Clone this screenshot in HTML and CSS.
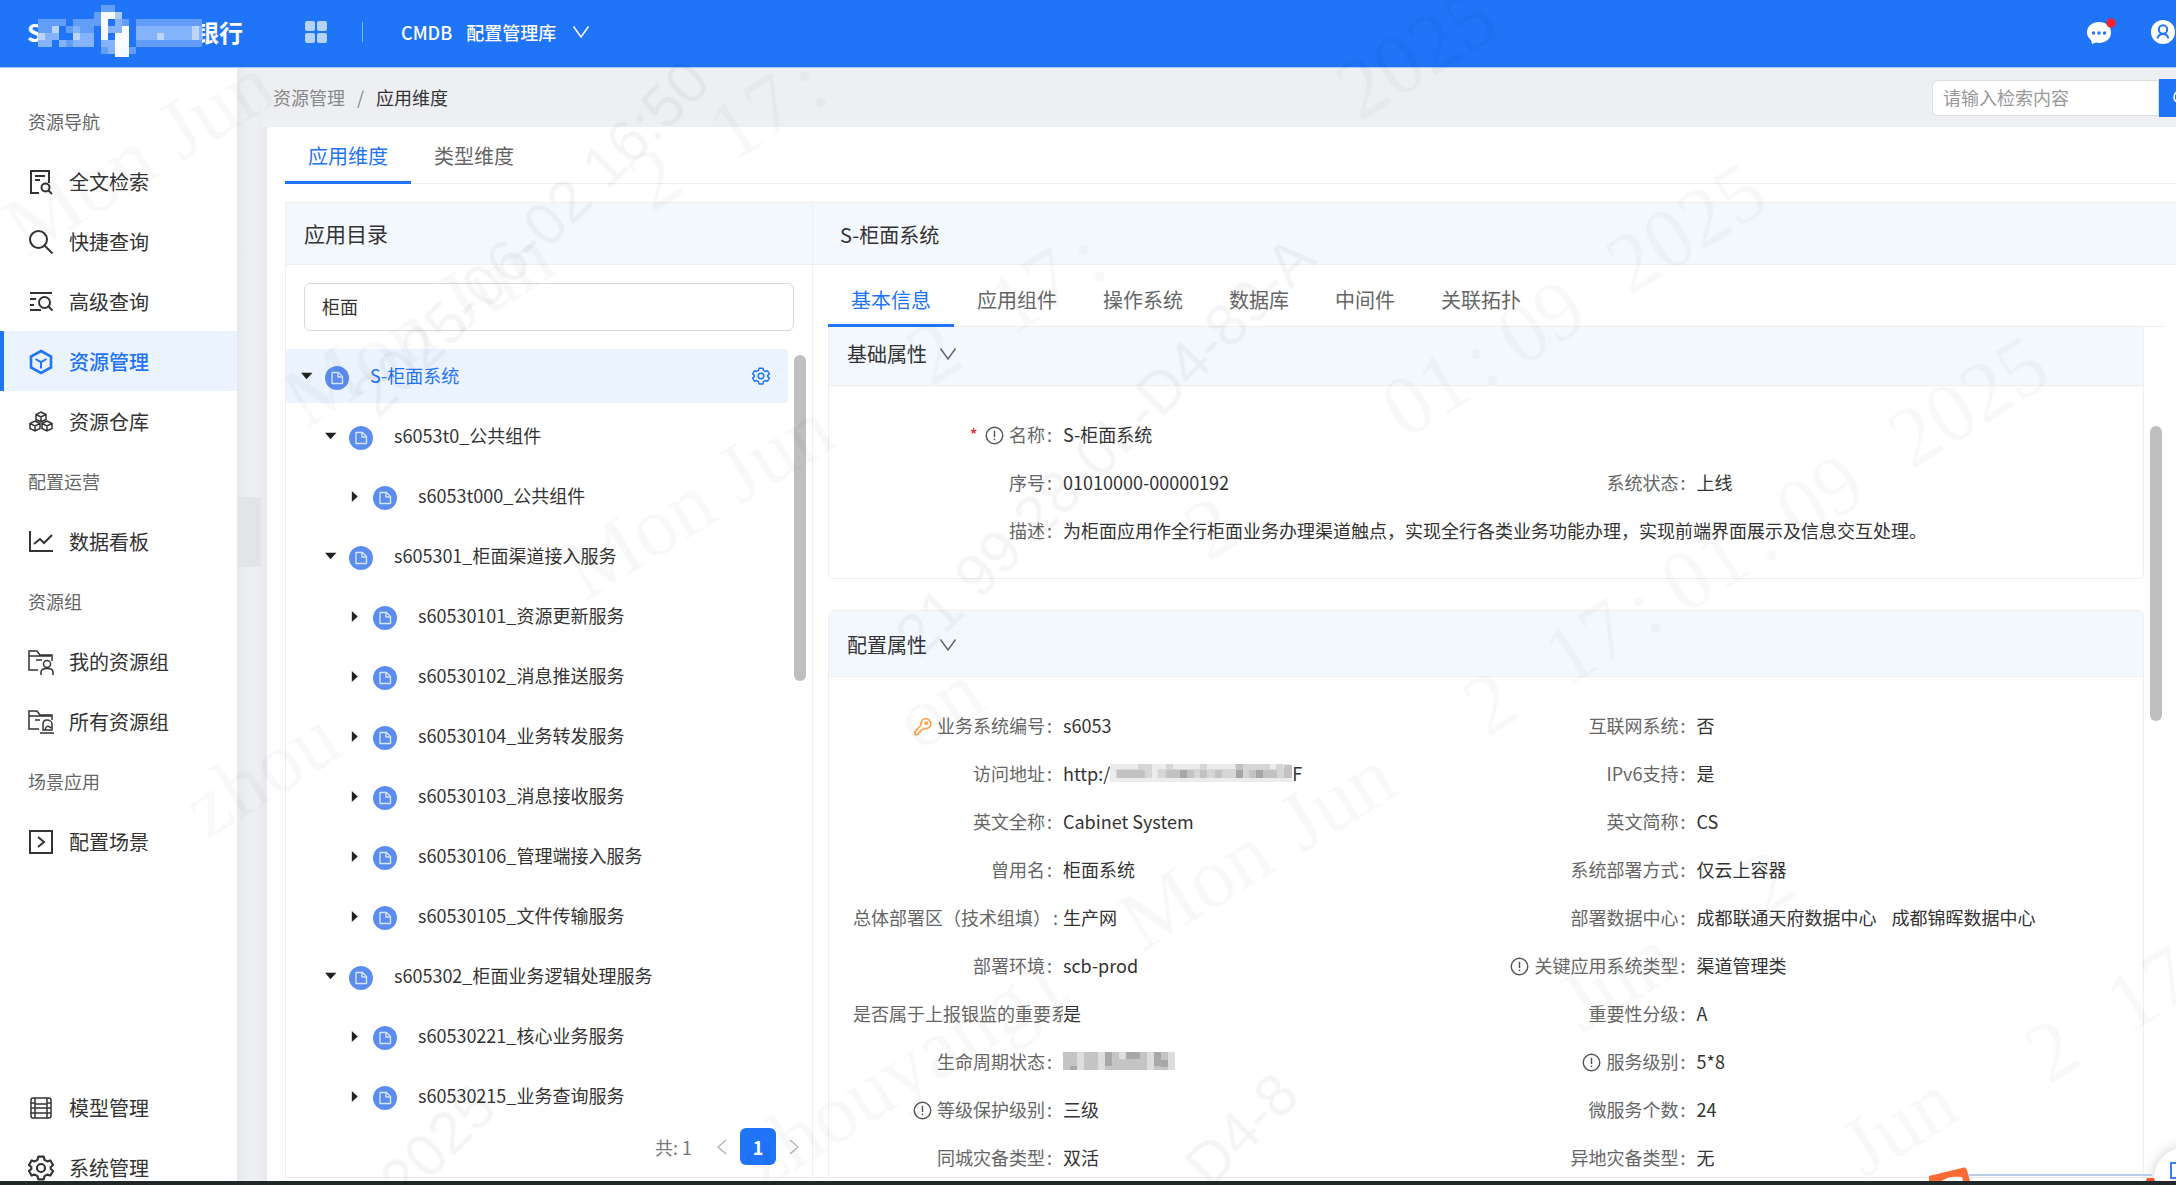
FILE: index.html
```html
<!DOCTYPE html>
<html lang="zh-CN">
<head>
<meta charset="utf-8">
<meta name="viewport" content="width=device-width, initial-scale=1">
<title>CMDB 配置管理库 - 资源管理</title>
<link rel="stylesheet" href="styles.css">
</head>
<body>
<svg class="sprite" aria-hidden="true">
  <symbol id="i-doc" viewBox="0 0 24 24"><circle cx="12" cy="12" r="12" fill="#5b8def"/><path d="M7 6.500h6.500l4 4v7h-10.500zM13 6.500v4.500h4.500" fill="none" stroke="#d5e2fb" stroke-width="1.400" stroke-linejoin="round"/></symbol>
  <symbol id="i-down" viewBox="0 0 12 12"><path d="M1 2.500h10.500L6 8.500z" fill="#222"/></symbol>
  <symbol id="i-right" viewBox="0 0 12 12"><path d="M3.500 1v10L9 6z" fill="#222"/></symbol>
  <symbol id="i-info" viewBox="0 0 20 20"><circle cx="10" cy="10" r="8.700" fill="none" stroke="#555" stroke-width="1.500"/><path d="M10 5v6.500M10 13.200v1.800" stroke="#555" stroke-width="1.500"/></symbol>
  <symbol id="i-chev" viewBox="0 0 18 18"><path d="M1.500 3.500L9 14l7.500-10.500" fill="none" stroke="currentColor" stroke-width="1.500"/></symbol>
  <symbol id="i-gear" viewBox="0 0 24 24"><path d="M9.500 1.500h5l.8 3 2.400 1.400 3-.9 2.400 4.200-2.200 2.100v1.400l2.200 2.100-2.400 4.200-3-.9-2.400 1.400-.8 3h-5l-.8-3-2.400-1.400-3 .9L.900 14.800l2.200-2.100v-1.400L.900 9.200l2.400-4.200 3 .9 2.400-1.400z" fill="none" stroke="currentColor" stroke-width="2" stroke-linejoin="round"/><circle cx="12" cy="12" r="3.700" fill="none" stroke="currentColor" stroke-width="2"/></symbol>
</svg>

<header class="header">
  <a class="logo" href="#" aria-label="首页"><span>S</span>
    <svg class="logo-mask" viewBox="0 0 164 56" aria-hidden="true">
      <rect width="164" height="56" fill="#1f74f7"/>
      <g fill="#fff">
        <path opacity=".3" d="M0 15h7v7H0zM7 15h14v7H7zM21 15h7v7h-7zM35 15h14v7H35zM49 15h7v7h-7zM0 22h14v7H0zM28 22h7v7h-7zM42 22h14v7H42zM28 36h7v7h-7zM56 8h7v14h-7zM63 1h14v7H63zM77 8h7v7h-7zM84 15h7v28h-7zM63 43h7v7h-7zM91 43h7v7h-7zM98 15h66v7H98zM98 36h66v7H98z"/>
        <path opacity=".45" d="M14 22h7v7h-7zM0 29h21v7H0zM7 36h7v7H7zM35 22h7v21h-7zM42 29h14v14H42zM63 15h7v7h-7zM98 22h66v14H98z"/>
        <path opacity=".45" d="M0 29h7v14H0zM14 22h7v7h-7zM21 36h7v7h-7zM35 29h7v7h-7zM77 8h7v14h-7zM70 22h14v7H70zM63 36h7v7h-7zM70 36h14v7H70zM70 43h7v7h-7zM119 29h7v7h-7zM154 22h7v14h-7z"/>
        <path opacity=".96" d="M63 8h14v7H63zM63 15h7v21h-7zM84 22h7v7h-7zM77 29h14v14H77zM77 43h14v7H77zM77 50h14v3H77z"/>
      </g>
    </svg><span>银行</span></a>
  <button class="icon-btn apps" aria-label="应用列表"><svg width="22" height="22" viewBox="0 0 22 22" fill="#b5d1fd"><rect width="10" height="10" rx="2"/><rect x="12" width="10" height="10" rx="2"/><rect y="12" width="10" height="10" rx="2"/><rect x="12" y="12" width="10" height="10" rx="2"/></svg></button>
  <span class="sep"></span>
  <button class="product"><span>CMDB</span><span>配置管理库</span><svg width="18" height="18"><use href="#i-chev"/></svg></button>
  <div class="header-right">
    <button class="icon-btn" aria-label="消息"><svg width="32" height="30" viewBox="0 0 32 30"><path d="M14 5C7 5 2 9.500 2 15.500c0 3 1.500 5.500 4 7.500L7 27l4-1.500c1 .3 2 .4 3 .4 7 0 12-4.400 12-10.400S21 5 14 5z" fill="#fff"/><circle cx="8.500" cy="16" r="1.700" fill="#1f74f7"/><circle cx="14" cy="16" r="1.700" fill="#1f74f7"/><circle cx="19.500" cy="16" r="1.700" fill="#1f74f7"/><circle cx="26" cy="6" r="4.700" fill="#f5222d"/></svg></button>
    <button class="icon-btn" aria-label="用户"><svg width="24" height="24" viewBox="0 0 24 24"><circle cx="12" cy="12" r="12" fill="#fff"/><circle cx="12" cy="9.500" r="4.200" fill="none" stroke="#1f74f7" stroke-width="2"/><path d="M6.500 18.500c.8-3 2.600-4.500 5.500-4.500s4.700 1.500 5.500 4.500" fill="none" stroke="#1f74f7" stroke-width="2"/></svg></button>
  </div>
</header>

<div class="body">
  <nav class="sidebar">
    <h2>资源导航</h2>
    <a href="#"><svg viewBox="0 0 26 26"><path d="M11 24H3V2h18v12" /><path d="M7 7h10M7 11h5"/><circle cx="17.500" cy="18.500" r="4"/><path d="M20.500 21.500l3.500 3.500"/></svg>全文检索</a>
    <a href="#"><svg viewBox="0 0 26 26"><circle cx="10.500" cy="10.500" r="8.500"/><path d="M16.500 16.500l8 8"/></svg>快捷查询</a>
    <a href="#"><svg viewBox="0 0 26 26"><path d="M2 4h22M2 10h6M2 16h4M2 21h11"/><circle cx="16.500" cy="13.500" r="5.500"/><path d="M20.500 17.500l4 4"/></svg>高级查询</a>
    <a href="#" class="on"><svg viewBox="0 0 26 26"><path d="M13 2l10 5.500v11L13 24 3 18.500v-11z" stroke-width="2.600"/><path d="M7.500 10l5.500 3.200 5.500-3.200M13 13v6.500"/></svg>资源管理</a>
    <a href="#"><svg viewBox="0 0 26 26" class="fine"><path d="M13 3l5 2.500v5L13 13l-5-2.500v-5zM8 5.500l5 2.500 5-2.500M13 8v5M7 12l5 2.500v5L7 22l-5-2.500v-5zM2 14.500L7 17l5-2.500M7 17v5M19 12l5 2.500v5L19 22l-5-2.500v-5zM14 14.500l5 2.500 5-2.500M19 17v5"/></svg>资源仓库</a>
    <h2>配置运营</h2>
    <a href="#"><svg viewBox="0 0 26 26"><path d="M2 2v20h23"/><path d="M6 15l6-5 4 4 8-8"/></svg>数据看板</a>
    <h2>资源组</h2>
    <a href="#"><svg viewBox="0 0 26 26" class="fine"><path d="M10 21H1V2h8l3 4h12v6M1 7h22M8 11h6"/><circle cx="19" cy="15" r="3.500"/><path d="M13 26v-3c0-2 2-3.500 6-3.500s6 1.500 6 3.500v3"/></svg>我的资源组</a>
    <a href="#"><svg viewBox="0 0 26 26" class="fine"><path d="M11 20H1V2h8l3 4h12v5M1 7h22M7 11h5"/><path d="M15 21v-6c0-2 1-4 4-4s5 2 5 4v6zM12 24h14M17 21c1-4 3-5 6-2"/></svg>所有资源组</a>
    <h2>场景应用</h2>
    <a href="#"><svg viewBox="0 0 26 26"><path d="M2 2h22v22H2z"/><path d="M10 8l6 5-6 5"/></svg>配置场景</a>
    <div class="nav-bottom">
      <a href="#"><svg viewBox="0 0 26 26" class="fine"><rect x="3" y="3" width="20" height="20" rx="2"/><path d="M7 3v20M19 3v20M7 9h12M7 13h12M7 18h12M3 8h4M3 13h4M3 18h4M19 8h4M19 13h4M19 18h4"/></svg>模型管理</a>
      <a href="#"><svg><use href="#i-gear"/></svg>系统管理</a>
    </div>
  </nav>

  <main class="main">
    <div class="topbar">
      <div class="crumbs"><a href="#">资源管理</a><i>/</i><span>应用维度</span></div>
      <form class="search"><input type="text" placeholder="请输入检索内容" aria-label="检索内容"><button type="button" aria-label="检索"><svg width="20" height="20" viewBox="0 0 20 20" fill="none" stroke="#fff" stroke-width="1.600"><circle cx="8" cy="9" r="6"/><path d="M13 14l5 5"/></svg></button></form>
    </div>
    <section class="card">
      <div class="tabs" role="tablist"><button class="tab on" role="tab">应用维度</button><button class="tab" role="tab">类型维度</button></div>
      <div class="panel">
        <aside class="left">
          <h3 class="panel-head">应用目录</h3>
          <div class="filter"><input type="text" value="柜面" aria-label="应用目录过滤"></div>
          <div class="tree-wrap">
            <ul class="tree">
              <li class="l0 on"><button aria-label="收起"><svg><use href="#i-down"/></svg></button><svg class="doc"><use href="#i-doc"/></svg><span>S-柜面系统</span><button class="cfg" aria-label="设置"><svg><use href="#i-gear"/></svg></button></li>
              <li class="l1"><button aria-label="收起"><svg><use href="#i-down"/></svg></button><svg class="doc"><use href="#i-doc"/></svg><span>s6053t0_公共组件</span></li>
              <li class="l2"><button aria-label="展开"><svg><use href="#i-right"/></svg></button><svg class="doc"><use href="#i-doc"/></svg><span>s6053t000_公共组件</span></li>
              <li class="l1"><button aria-label="收起"><svg><use href="#i-down"/></svg></button><svg class="doc"><use href="#i-doc"/></svg><span>s605301_柜面渠道接入服务</span></li>
              <li class="l2"><button aria-label="展开"><svg><use href="#i-right"/></svg></button><svg class="doc"><use href="#i-doc"/></svg><span>s60530101_资源更新服务</span></li>
              <li class="l2"><button aria-label="展开"><svg><use href="#i-right"/></svg></button><svg class="doc"><use href="#i-doc"/></svg><span>s60530102_消息推送服务</span></li>
              <li class="l2"><button aria-label="展开"><svg><use href="#i-right"/></svg></button><svg class="doc"><use href="#i-doc"/></svg><span>s60530104_业务转发服务</span></li>
              <li class="l2"><button aria-label="展开"><svg><use href="#i-right"/></svg></button><svg class="doc"><use href="#i-doc"/></svg><span>s60530103_消息接收服务</span></li>
              <li class="l2"><button aria-label="展开"><svg><use href="#i-right"/></svg></button><svg class="doc"><use href="#i-doc"/></svg><span>s60530106_管理端接入服务</span></li>
              <li class="l2"><button aria-label="展开"><svg><use href="#i-right"/></svg></button><svg class="doc"><use href="#i-doc"/></svg><span>s60530105_文件传输服务</span></li>
              <li class="l1"><button aria-label="收起"><svg><use href="#i-down"/></svg></button><svg class="doc"><use href="#i-doc"/></svg><span>s605302_柜面业务逻辑处理服务</span></li>
              <li class="l2"><button aria-label="展开"><svg><use href="#i-right"/></svg></button><svg class="doc"><use href="#i-doc"/></svg><span>s60530221_核心业务服务</span></li>
              <li class="l2"><button aria-label="展开"><svg><use href="#i-right"/></svg></button><svg class="doc"><use href="#i-doc"/></svg><span>s60530215_业务查询服务</span></li>
            </ul>
            <div class="thumb tree-thumb"></div>
          </div>
          <div class="pager"><span>共: 1</span><button aria-label="上一页"><svg width="10" height="16" viewBox="0 0 10 16"><path d="M9 1L1 8l8 7"/></svg></button><button class="cur">1</button><button aria-label="下一页"><svg width="10" height="16" viewBox="0 0 10 16"><path d="M1 1l8 7-8 7"/></svg></button></div>
        </aside>

        <section class="right">
          <h3 class="panel-head">S-柜面系统</h3>
          <div class="tabs sub" role="tablist"><button class="tab on" role="tab">基本信息</button><button class="tab" role="tab">应用组件</button><button class="tab" role="tab">操作系统</button><button class="tab" role="tab">数据库</button><button class="tab" role="tab">中间件</button><button class="tab" role="tab">关联拓扑</button></div>
          <div class="scroll">
            <div class="groups">
              <section class="group first">
                <h4>基础属性 <svg width="18" height="18"><use href="#i-chev"/></svg></h4>
                <dl>
                  <div class="wide"><dt><b>*</b><svg><use href="#i-info"/></svg>名称<em>:</em></dt><dd>S-柜面系统</dd></div>
                  <div><dt>序号<em>:</em></dt><dd>01010000-00000192</dd></div>
                  <div><dt>系统状态<em>:</em></dt><dd>上线</dd></div>
                  <div class="wide"><dt>描述<em>:</em></dt><dd>为柜面应用作全行柜面业务办理渠道触点，实现全行各类业务功能办理，实现前端界面展示及信息交互处理。</dd></div>
                </dl>
              </section>
              <section class="group">
                <h4>配置属性 <svg width="18" height="18"><use href="#i-chev"/></svg></h4>
                <dl>
                  <div><dt><svg viewBox="0 0 20 20" fill="none" stroke="#ff9f45" stroke-width="1.700" stroke-linejoin="round"><path d="M8.500 8.500a5.200 5.200 0 1 1 3.500 3.500l-1.500 1.200-1.700.3-.3 2-2 .3-.5 1.700-1.500 1H2v-3z"/><circle cx="14" cy="6.500" r="1.200"/></svg>业务系统编号<em>:</em></dt><dd>s6053</dd></div>
                  <div><dt>互联网系统<em>:</em></dt><dd>否</dd></div>
                  <div><dt>访问地址<em>:</em></dt><dd class="url">http:/<svg class="mosaic" width="182" height="18" viewBox="0 0 182 18" aria-hidden="true"><path fill="#ececec" d="M0 0h182v18H0z"/><path fill="#d6d6d6" d="M6 5h36v9H6zM28 0h14v5H28zM48 5h130v9H48zM56 0h7v5h-7zM90 0h7v5h-7zM125 0h35v14h-35zM166 0h7v14h-7z"/><path fill="#c2c2c2" d="M7 6h28v8H7zM56 6h28v8H56zM90 6h7v8h-7zM105 6h7v8h-7zM126 0h7v14h-7zM139 6h28v8h-28zM174 1h8v13h-8z"/><path fill="#a6a6a6" d="M70 6h7v8h-7zM126 6h7v8h-7zM146 6h7v8h-7z"/></svg>F</dd></div>
                  <div><dt>IPv6支持<em>:</em></dt><dd>是</dd></div>
                  <div><dt>英文全称<em>:</em></dt><dd>Cabinet System</dd></div>
                  <div><dt>英文简称<em>:</em></dt><dd>CS</dd></div>
                  <div><dt>曾用名<em>:</em></dt><dd>柜面系统</dd></div>
                  <div><dt>系统部署方式<em>:</em></dt><dd>仅云上容器</dd></div>
                  <div><dt>总体部署区（技术组填）<em>:</em></dt><dd>生产网</dd></div>
                  <div><dt>部署数据中心<em>:</em></dt><dd><span>成都联通天府数据中心</span><span>成都锦晖数据中心</span></dd></div>
                  <div><dt>部署环境<em>:</em></dt><dd>scb-prod</dd></div>
                  <div><dt><svg><use href="#i-info"/></svg>关键应用系统类型<em>:</em></dt><dd>渠道管理类</dd></div>
                  <div><dt>是否属于上报银监的重要系统<em>:</em></dt><dd>是</dd></div>
                  <div><dt>重要性分级<em>:</em></dt><dd>A</dd></div>
                  <div><dt>生命周期状态<em>:</em></dt><dd><svg class="mosaic" width="112" height="18" viewBox="0 0 112 18" aria-hidden="true"><path fill="#ddd" d="M0 0h112v18H0z"/><path fill="#c4c4c4" d="M0 0h14v18H0zM21 0h14v18H21zM42 0h14v18H42zM56 7h28v11H56zM63 0h21v7H63zM91 0h14v18H91z"/><path fill="#a8a8a8" d="M42 0h7v14h-7zM63 0h14v7H63zM91 0h7v14h-7zM98 8h7v7h-7zM7 14h7v4H7z"/></svg></dd></div>
                  <div><dt><svg><use href="#i-info"/></svg>服务级别<em>:</em></dt><dd>5*8</dd></div>
                  <div><dt><svg><use href="#i-info"/></svg>等级保护级别<em>:</em></dt><dd>三级</dd></div>
                  <div><dt>微服务个数<em>:</em></dt><dd>24</dd></div>
                  <div><dt>同城灾备类型<em>:</em></dt><dd>双活</dd></div>
                  <div><dt>异地灾备类型<em>:</em></dt><dd>无</dd></div>
                </dl>
              </section>
            </div>
            <div class="thumb info-thumb"></div>
          </div>
        </section>
      </div>
    </section>
  </main>
  <div class="collapse"></div>
  <button class="float" aria-label="文档"><svg width="20" height="20" viewBox="0 0 20 20" fill="none" stroke="#3b7ff5" stroke-width="2"><path d="M1 16V1h12v15z"/></svg></button>
  <svg class="ime" viewBox="0 0 224 14" aria-hidden="true"><path d="M41 8h183" stroke="#b9cdea" stroke-width="2"/><path d="M1 14V9L34 1c3-1 4 0 5 2l3 11h-7l-1-4c-8-1-16 0-20 4z" fill="#fb6b33"/><path d="M218 14l1-3h7l1 3z" fill="#f4512c"/></svg>
</div>
<div class="taskbar"></div>

<svg class="watermark" aria-hidden="true">
  <defs>
    <g id="wm-name"><text>zhouyang1</text></g>
    <g id="wm-mon"><text>Mon</text></g>
    <g id="wm-jun"><text>Jun</text></g>
    <g id="wm-hour"><text>2</text><text x="94">17</text><text x="190">:</text></g>
    <g id="wm-min"><text>01</text><text x="94">:</text><text x="136">09</text></g>
    <g id="wm-year"><text>2025</text></g>
  </defs>
  <g class="wm-serif">
    <use href="#wm-mon" transform="translate(27 258) rotate(-32)"/>
    <use href="#wm-jun" transform="translate(181 162) rotate(-32)"/>
    <use href="#wm-mon" transform="translate(306 430) rotate(-32)"/>
    <use href="#wm-jun" transform="translate(460 334) rotate(-32)"/>
    <use href="#wm-hour" transform="translate(652 213) rotate(-32)"/>
    <text transform="translate(207 840) rotate(-32)">zhou</text>
    <use href="#wm-mon" transform="translate(586 602) rotate(-32)"/>
    <use href="#wm-jun" transform="translate(740 506) rotate(-32)"/>
    <use href="#wm-hour" transform="translate(931 387) rotate(-32)"/>
    <use href="#wm-year" transform="translate(1360 122) rotate(-32)"/>
    <use href="#wm-name" transform="translate(762 1191) rotate(-32)"/>
    <use href="#wm-mon" transform="translate(1143 953) rotate(-32)"/>
    <use href="#wm-jun" transform="translate(1302 854) rotate(-32)"/>
    <use href="#wm-hour" transform="translate(1487 738) rotate(-32)"/>
    <use href="#wm-min" transform="translate(1684 615) rotate(-32)"/>
    <use href="#wm-year" transform="translate(1912 470) rotate(-32)"/>
    <text transform="translate(918 752) rotate(-32)">on</text>
    <text transform="translate(1208 563) rotate(-32)">2</text>
    <use href="#wm-min" transform="translate(1405 440) rotate(-32)"/>
    <use href="#wm-year" transform="translate(1630 296) rotate(-32)"/>
    <use href="#wm-jun" transform="translate(1582 1034) rotate(-32)"/>
    <text transform="translate(1765 916) rotate(-32)">2</text>
    <use href="#wm-jun" transform="translate(1864 1179) rotate(-32)"/>
    <use href="#wm-hour" transform="translate(2049 1085) rotate(-32)"/>
  </g>
  <g class="wm-sans">
    <text transform="translate(378 420) rotate(-45)">2025-06-02 16:50</text>
    <text transform="translate(405 1205) rotate(-45)">2025-</text>
    <text transform="translate(920 660) rotate(-45)">21 99 28-0L-D4-89-A</text>
    <text transform="translate(1210 1190) rotate(-45)">D4-8</text>
  </g>
</svg>
</body>
</html>
```
FILE: styles.css
```css
* { box-sizing: border-box; }
body {
  margin: 0;
  height: 100vh;
  overflow: hidden;
  display: flex;
  flex-direction: column;
  background: #edeff3;
  color: #333;
  font: 18px/24px "Noto Sans CJK SC", "Noto Sans", sans-serif;
}
h2, h3, h4, ul, dl, dd { margin: 0; padding: 0; font-weight: 400; }
ul { list-style: none; }
button, input { font: inherit; color: inherit; }
button { border: 0; background: none; padding: 0; cursor: pointer; }
a { color: inherit; text-decoration: none; }
svg { flex: none; }
.sprite { position: absolute; width: 0; height: 0; }

/* Header */
.header {
  display: flex;
  align-items: center;
  flex: none;
  height: 68px;
  padding: 0 0 4px 27px;
  background: #1f74f7;
  border-bottom: 1px solid #a9c9fb;
  color: #fff;
}
.logo { display: flex; align-items: center; font-size: 24px; font-weight: 700; width: 278px; }
.logo span { flex: none; }
.logo-mask { width: 164px; height: 56px; margin: 0 -7px 0 -4px; position: relative; }
.icon-btn { display: flex; }
.sep { width: 1px; height: 20px; margin: 0 38px 0 35px; background: #7fb0fb; }
.product { display: flex; align-items: center; gap: 16px; font-weight: 500; }
.product span + span { margin-left: -1px; }
.product span:first-child { margin-right: -1px; }
.header-right { display: flex; align-items: center; gap: 34px; margin-left: auto; padding-right: 1px; }

.body { display: flex; flex: 1; min-height: 0; position: relative; overflow: hidden; }

/* Sidebar */
.sidebar {
  display: flex;
  flex-direction: column;
  flex: none;
  width: 237px;
  padding-top: 23px;
  background: #fff;
}
.sidebar h2 { padding-left: 28px; font-size: 18px; line-height: 60px; color: #666; }
.sidebar a {
  display: flex;
  align-items: center;
  gap: 15px;
  height: 60px;
  padding: 2px 0 0 28px;
  font-size: 20px;
  color: #333;
}
.sidebar svg { width: 26px; height: 26px; fill: none; stroke: currentColor; stroke-width: 2; }
.sidebar svg.fine { stroke-width: 1.5; }
.sidebar a.on { padding-left: 24px; border-left: 4px solid #1f74f7; background: #ebf3ff; color: #1f74f7; font-weight: 500; }
.nav-bottom { margin: auto 0 -16px; }
.collapse { position: absolute; left: 237px; top: 429px; width: 24px; height: 70px; background: #e2e4e8; }

/* Main */
.main {
  display: flex;
  flex-direction: column;
  flex: 1;
  min-width: 0;
  padding: 0 0 0 30px;
  background: linear-gradient(90deg, #e6e8ed, #edeff3 12px, #edeff3 20px, #e7e9ee 30px);
}
.topbar {
  display: flex;
  align-items: center;
  justify-content: space-between;
  height: 59px;
  padding-left: 6px;
  margin-left: -6px;
  background: #edeff3;
}
.crumbs { display: flex; padding: 0 0 2px 6px; color: #888; }
.crumbs i { width: 31px; text-align: center; font-style: normal; }
.crumbs span { color: #333; }
.search { display: flex; align-items: center; margin-right: -34px; }
.search input { width: 227px; height: 36px; padding: 0 10px 2px; border: 1px solid #dcdee2; border-radius: 6px 0 0 6px; background: #fff; outline: 0; }
.search input::placeholder { color: #999; opacity: 1; }
.search button { width: 51px; height: 38px; padding-left: 13px; background: #1f74f7; display: flex; align-items: center; }

.card {
  display: flex;
  flex-direction: column;
  flex: 1;
  min-height: 0;
  padding: 0 0 3px 18px;
  background: #fff;
  border-radius: 4px 0 0 0;
}
.tabs { display: flex; flex: none; height: 57px; border-bottom: 1px solid #eee; }
.tab { height: 57px; padding: 3px 23px 0; border-bottom: 3px solid transparent; font-size: 20px; color: #666; }
.tab.on { color: #1f74f7; border-color: #1f74f7; }

.panel { display: flex; flex: 1; min-height: 0; margin-top: 18px; border: 1px solid #eee; border-right: 0; }
.panel-head { flex: none; height: 62px; padding: 0 18px; border-bottom: 1px solid #eee; background: #f3f8ff; font-size: 21px; line-height: 60px; }
.left { display: flex; flex-direction: column; flex: none; width: 527px; border-right: 1px solid #eee; }
.right { display: flex; flex-direction: column; flex: 1; min-width: 0; }
.right .panel-head { padding: 0 27px; font-size: 20px; line-height: 64px; }

.filter { padding: 18px 18px 0; }
.filter input { display: block; width: 100%; height: 48px; padding: 0 17px 2px; border: 1px solid #d9d9d9; border-radius: 6px; outline: 0; }

.tree-wrap { display: flex; gap: 6px; margin-top: 18px; padding-right: 6px; }
.tree { flex: 1; }
.tree li { display: flex; align-items: center; height: 54px; margin-bottom: 6px; padding-right: 18px; }
.tree li button { display: flex; flex: none; margin-right: 12px; }
.tree li button svg { width: 13px; height: 13px; }
.tree .doc { width: 24px; height: 24px; margin: 4px 21px 0 0; }
.tree li span { padding-bottom: 2px; }
.tree .l0 { padding-left: 14px; }
.tree .l1 { padding-left: 38px; }
.tree .l2 { padding-left: 62px; }
.tree .on { background: #ebf3ff; border-radius: 4px; color: #1f74f7; }
.tree li .cfg { margin: 0 0 0 auto; }
.tree li .cfg svg { width: 18px; height: 18px; }
.thumb { flex: none; width: 12px; border-radius: 6px; background: #bfbfbf; }
.tree-thumb { height: 326px; margin-top: 6px; }

.pager { display: flex; align-items: center; justify-content: flex-end; gap: 13px; margin-top: -1px; padding-right: 13px; color: #777; }
.pager span { margin-right: 12px; }
.pager button { display: flex; align-items: center; justify-content: center; }
.pager svg { fill: none; stroke: #b5b5b5; stroke-width: 1.5; }
.pager .cur { width: 36px; height: 37px; border-radius: 6px; background: #1f74f7; color: #fff; font-weight: 700; }

/* Detail */
.sub { height: 62px; margin: 0 12px 0 15px; }
.sub .tab { height: 62px; padding-top: 10px; }
.scroll { display: flex; flex: 1; min-height: 0; overflow: hidden; gap: 6px; padding: 0 14px 0 15px; }
.groups { flex: 1; min-width: 0; margin-top: -8px; }
.group { margin-bottom: 31px; border: 1px solid #eee; border-radius: 6px; }
.group h4 { display: flex; align-items: center; gap: 12px; height: 66px; padding: 2px 18px 0; border-bottom: 1px solid #eee; background: #f3f8ff; font-size: 20px; }
.group h4 svg { color: #666; }
.group dl { display: grid; grid-template-columns: 1fr 1fr; padding: 24px 23px 24px 24px; }
.group dl div { display: flex; height: 48px; align-items: center; min-width: 0; }
.group .wide { grid-column: 1 / -1; }
.group dt { flex: none; width: 210px; overflow: hidden; white-space: nowrap; text-align: right; color: #666; }
.group dt svg { width: 19px; height: 19px; margin-right: 5px; vertical-align: -3px; }
.group dt b { margin-right: 7px; color: #f5222d; font-weight: 400; }
.group dt em { margin: 0 11px 0 2px; font-style: normal; }
.group dd { display: flex; gap: 15px; align-items: center; white-space: nowrap; }
.group dd.url { gap: 0; }
.info-thumb { height: 295px; margin-top: 99px; }

.float {
  position: absolute;
  right: -38px;
  bottom: -27px;
  width: 60px;
  height: 60px;
  padding: 14px 0 0 16px;
  border-radius: 50%;
  background: #fff;
  box-shadow: 0 0 14px rgba(0, 0, 0, .2);
  display: flex;
}
.ime { position: absolute; right: 24px; bottom: 0; width: 224px; height: 14px; overflow: visible; }
.taskbar { flex: none; height: 4px; background: #222829; position: relative; }

.watermark { position: absolute; left: 0; top: 0; width: 100%; height: 100%; pointer-events: none; fill: #000; }
.wm-serif { font: 84px "Liberation Serif", serif; opacity: .03; }
.wm-sans { font: 60px "Liberation Sans", sans-serif; opacity: .04; }
```
